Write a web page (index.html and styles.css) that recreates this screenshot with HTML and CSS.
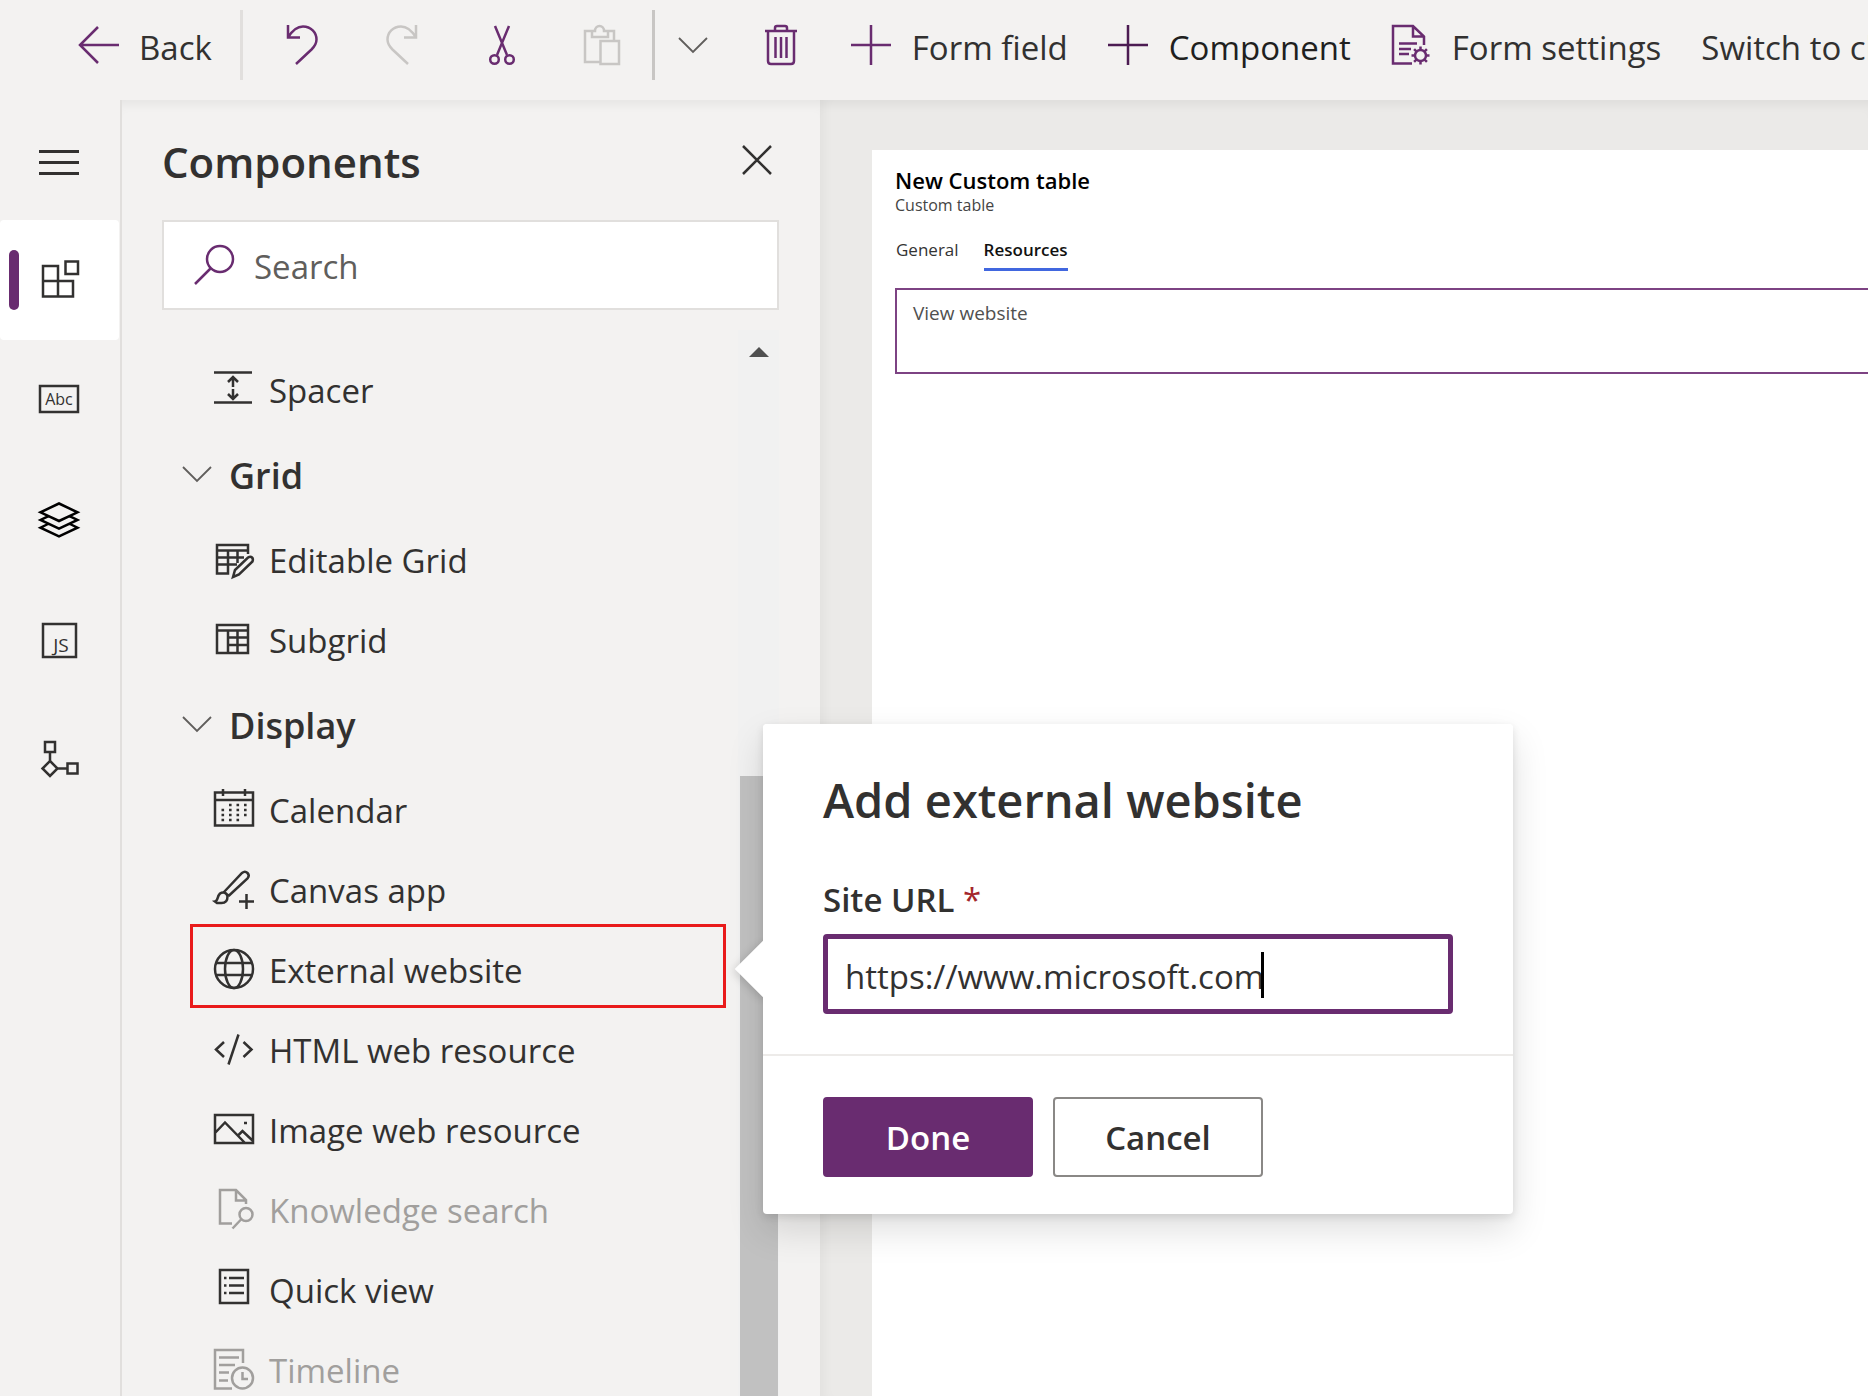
FILE: index.html
```html
<!DOCTYPE html>
<html lang="en">
<head>
<meta charset="utf-8">
<title>Form designer</title>
<link rel="stylesheet" href="styles.css">
</head>
<body>
<header class="bar">
  <button class="bar-item bar-back" type="button">
    <svg class="icon" viewBox="0 0 40 40"><path d="M40 20H1M19 2 1 20l18 18"/></svg><span>Back</span>
  </button>
  <span class="divider"></span>
  <button class="bar-icon" type="button" aria-label="Undo">
    <svg class="icon" viewBox="0 0 40 40"><path d="M6 0v12.500h12M6 12.500C10 6 15 1.500 21 1.500c8 0 13.500 6 13.500 13 0 5-3 8-5 10L14 39"/></svg>
  </button>
  <button class="bar-icon off" type="button" aria-label="Redo" disabled>
    <svg class="icon" viewBox="0 0 40 40"><path d="M34 0v12.500H22M34 12.500C30 6 25 1.500 19 1.500 11 1.500 5.500 7.500 5.500 14.500c0 5 3 8 5 10L26 39"/></svg>
  </button>
  <button class="bar-icon" type="button" aria-label="Cut">
    <svg class="icon" viewBox="0 0 40 40"><path d="M13 1l12 29M27 1 15 30"/><circle cx="12.500" cy="34.500" r="4.300"/><circle cx="27.500" cy="34.500" r="4.300"/></svg>
  </button>
  <button class="bar-icon off" type="button" aria-label="Paste" disabled>
    <svg class="icon" viewBox="0 0 40 40"><path d="M18 37H3V6h7M26 6h6v10M10 6h3c0-3 2-5 4.500-5S22 3 22 6h4v6H10zM18.500 16H37v23H18.500z"/></svg>
  </button>
  <span class="divider strong"></span>
  <button class="bar-icon narrow" type="button" aria-label="More paste options">
    <svg class="icon thin" viewBox="0 0 40 40"><path d="M6 13l14 14 14-14"/></svg>
  </button>
  <button class="bar-icon" type="button" aria-label="Delete">
    <svg class="icon" viewBox="0 0 40 40"><path d="M4 6h32M7 6v30q0 3 3 3h20q3 0 3-3V6M14 6V3q0-2 2-2h8q2 0 2 2v3M14.500 12v21M20 12v21M25.500 12v21"/></svg>
  </button>
  <button class="bar-item" type="button">
    <svg class="icon" viewBox="0 0 40 40"><path d="M20 0v40M0 20h40"/></svg><span>Form field</span>
  </button>
  <button class="bar-item hot" type="button">
    <svg class="icon" viewBox="0 0 40 40"><path d="M20 0v40M0 20h40"/></svg><span>Component</span>
  </button>
  <button class="bar-item" type="button">
    <svg class="icon" viewBox="0 0 40 40"><path d="M21 38.500H2V1h20l11 10.500V20M22 1v10.500h11M8 18.500h18M8 24h12M8 29h10"/><circle cx="29.500" cy="30.500" r="5.500"/><path d="M29.500 25v-3.500M29.500 36v3.500M24 30.500h-3.500M35 30.500h3.500M25.600 26.600l-2.500-2.500M33.400 34.400l2.500 2.500M33.400 26.600l2.500-2.500M25.600 34.400l-2.500 2.500"/></svg><span>Form settings</span>
  </button>
  <button class="bar-item" type="button"><span>Switch to classic</span></button>
</header>

<main class="work">
  <nav class="rail" aria-label="Designer panes">
    <button class="rail-item" type="button" aria-label="Menu">
      <svg class="icon heavy" viewBox="0 0 40 40"><path d="M0 11.500h40M0 22.500h40M0 33.500h40"/></svg>
    </button>
    <button class="rail-item active" type="button" aria-label="Components">
      <svg class="icon" viewBox="0 0 40 40"><path d="M19 21V6H4v30.500h30V21H4M19 21v15.500M26.500 1.500H39V14H26.500z"/></svg>
    </button>
    <button class="rail-item" type="button" aria-label="Table columns">
      <svg class="icon" viewBox="0 0 40 40"><path d="M1 6h38v26H1z"/><text class="glyph-abc" x="20" y="25" text-anchor="middle">Abc</text></svg>
    </button>
    <button class="rail-item black" type="button" aria-label="Tree view">
      <svg class="icon" viewBox="0 0 40 40"><path d="M20 3.500 38.500 12.300 20 21 1.500 12.300zM9 16.300 1.500 20 20 28.700 38.500 20 31 16.300M9 24 1.500 27.700 20 36.300l18.500-8.600L31 24"/></svg>
    </button>
    <button class="rail-item" type="button" aria-label="Form libraries">
      <svg class="icon" viewBox="0 0 40 40"><path d="M4 4h33v33H4z"/><text class="glyph-js" x="22" y="32" text-anchor="middle">JS</text></svg>
    </button>
    <button class="rail-item" type="button" aria-label="Business rules">
      <svg class="icon" viewBox="0 0 40 40"><path d="M6 2h10v10H6zM11 12v9M11 21l7.500 7.500L11 36l-7.500-7.500zM18.500 28.500H28M28.500 23.500h10v10h-10z"/></svg>
    </button>
  </nav>

  <section class="panel">
    <div class="panel-head">
      <h1>Components</h1>
      <button class="close" type="button" aria-label="Close">
        <svg class="icon" viewBox="0 0 40 40"><path d="M6 6l28 28M34 6 6 34"/></svg>
      </button>
    </div>
    <label class="search">
      <svg class="icon" viewBox="0 0 40 40"><circle cx="26" cy="14" r="13"/><path d="M17 23 1 39"/></svg>
      <input type="search" placeholder="Search" aria-label="Search components">
    </label>
    <div class="list-wrap">
      <div class="list">
        <button class="item" type="button"><svg class="icon" viewBox="0 0 40 40"><path d="M0 2.500h38M0 32.500h38M19 17V7M14 12l5-5 5 5M19 19v10M14 24l5 5 5-5"/></svg>Spacer</button>
        <h2 class="group"><svg class="chev" viewBox="0 0 30 30"><path d="M1 7l14 14L29 7"/></svg>Grid</h2>
        <button class="item" type="button"><svg class="icon" viewBox="0 0 40 40"><path d="M34 14V5H3v28.500h11V10.500M3 10.500h31M3 17.500h27M3 24.500h20M23.500 10.500V23"/><path d="M19 37l2-7L34 17.500q2.500-1.500 4 0t.5 4L25 34.500z"/></svg>Editable Grid</button>
        <button class="item" type="button"><svg class="icon" viewBox="0 0 40 40"><path d="M3 5h31v28H3zM3 10.500h31M14 10.500V33M23.500 10.500V33M14 17.500h20M14 25h20"/></svg>Subgrid</button>
        <h2 class="group"><svg class="chev" viewBox="0 0 30 30"><path d="M1 7l14 14L29 7"/></svg>Display</h2>
        <button class="item" type="button"><svg class="icon" viewBox="0 0 40 40"><path d="M1 2.500h38v33H1zM1 10h38M9 -1v7M31 -1v7"/><path class="dots" d="M15 15h18M7.500 20h26M7.500 25h26M7.500 30h18"/></svg>Calendar</button>
        <button class="item" type="button"><svg class="icon" viewBox="0 0 40 40"><path d="M10 22 28 3q3-2.500 5.500 0t0 5.500L14.500 26M1 31.500c3-.5 2-5 5-8 3-2 7-1 7.500 3 0 5-3 6.500-6 6.500H3zM10 22l5 4M32.500 24v15M25 31.500h15"/></svg>Canvas app</button>
        <button class="item marked" type="button"><svg class="icon" viewBox="0 0 40 40"><circle cx="20" cy="19" r="19"/><ellipse cx="20" cy="19" rx="9" ry="19"/><path d="M2 13h36M2 25h36"/></svg>External website</button>
        <button class="item" type="button"><svg class="icon" viewBox="0 0 40 40"><path d="M10 12 2 19.500 10 27M29.500 12l8 7.500-8 7.500M24.500 4.500l-10 30"/></svg>HTML web resource</button>
        <button class="item" type="button"><svg class="icon" viewBox="0 0 40 40"><path d="M1 5h38v28H1zM1 23l10-10.500L31 33M24 25.500l4.500-4.500L39 31M30 13h3"/></svg>Image web resource</button>
        <button class="item" type="button" disabled><svg class="icon" viewBox="0 0 40 40"><path d="M18 33.500H6V0h16l10 10v4M22 0v10.500h10"/><circle cx="32" cy="24.500" r="6.500"/><path d="M27.500 29 18.500 38.500"/></svg>Knowledge search</button>
        <button class="item" type="button"><svg class="icon" viewBox="0 0 40 40"><path d="M6 0h28v33H6zM10 8h2.500M15 8h15M10 15.500h2.500M15 15.500h15M10 23h2.500M15 23h15"/></svg>Quick view</button>
        <button class="item" type="button" disabled><svg class="icon" viewBox="0 0 40 40"><path d="M18 38.500H1V0h28v13M5 7.500h20M5 15h16M5 22.500h10M5 30.500h9"/><circle cx="28.500" cy="28" r="10.500"/><path d="M28.500 22v7H34"/></svg>Timeline</button>
      </div>
      <div class="scroll" aria-hidden="true">
        <svg class="scroll-up" viewBox="0 0 20 10"><path d="M10 0 20 10H0z"/></svg>
        <div class="thumb"></div>
      </div>
    </div>
  </section>

  <section class="canvas">
    <div class="form">
      <h2 class="form-title">New Custom table</h2>
      <p class="form-sub">Custom table</p>
      <div class="tabs" role="tablist">
        <button class="tab" type="button" role="tab">General</button>
        <button class="tab selected" type="button" role="tab" aria-selected="true">Resources</button>
      </div>
      <div class="section">View website</div>
    </div>
  </section>

  <form class="callout" role="dialog" aria-labelledby="callout-title">
    <div class="callout-body">
      <h2 id="callout-title">Add external website</h2>
      <label for="site-url">Site URL <span class="req">*</span></label>
      <div class="field">
        <input id="site-url" type="text" value="https://www.microsoft.com">
        <span class="caret"></span>
      </div>
    </div>
    <div class="callout-foot">
      <button class="btn primary" type="button">Done</button>
      <button class="btn" type="button">Cancel</button>
    </div>
  </form>
</main>
</body>
</html>
```
FILE: styles.css
```css
* { box-sizing: border-box; }

:root {
  --brand: #692c70;
  --ink: #323130;
  --paper: #f3f2f1;
  --line: #e1dfdd;
  --muted: #a19f9d;
}

body {
  margin: 0;
  height: 100vh;
  display: flex;
  flex-direction: column;
  overflow: hidden;
  background: var(--paper);
  color: var(--ink);
  font-family: "Open Sans", "Noto Sans", sans-serif;
  font-size: 33px;
}

h1, h2, p { margin: 0; font-weight: 600; }

button, input { font: inherit; color: inherit; }

button {
  border: 0;
  padding: 0;
  background: none;
  white-space: nowrap;
}

.icon {
  flex: none;
  width: 40px;
  height: 40px;
  overflow: visible;
  fill: none;
  stroke: currentColor;
  stroke-width: 2.5;
}

.icon.thin { stroke-width: 1.8; color: #605e5c; }
.icon.heavy { stroke-width: 3; }

/* command bar */
.bar {
  flex: none;
  display: flex;
  align-items: center;
  height: 100px;
  padding-bottom: 10px;
  overflow: hidden;
}

.bar-item {
  flex: none;
  display: flex;
  align-items: center;
  gap: 21px;
  padding: 0 20px;
}

.bar-item .icon, .bar-icon { color: var(--brand); }
.bar-item span { padding-top: 4px; }
.bar-back { gap: 20px; padding: 0 28px 0 79px; }

.bar-icon {
  flex: none;
  display: flex;
  justify-content: center;
  width: 100px;
}

.bar-icon.off { color: #c8c6c4; }
.bar-icon.narrow { width: 76px; }
.hot { color: #201f1e; }
.hot .icon { color: #4b1b52; }

.divider {
  flex: none;
  width: 3px;
  height: 70px;
  margin-right: 9px;
  background: var(--line);
}

.divider.strong { margin-right: 0; background: #c8c6c4; }

/* work area */
.work {
  position: relative;
  flex: 1;
  min-height: 0;
  display: flex;
}

.rail {
  flex: none;
  width: 122px;
  border-right: 2px solid var(--line);
}

.rail-item {
  position: relative;
  display: flex;
  align-items: center;
  width: 119px;
  height: 120px;
  padding-left: 39px;
}

.rail-item.active { background: #fff; border-radius: 4px; }
.rail-item.black { color: #000; }

.rail-item.active::before {
  content: "";
  position: absolute;
  left: 9px;
  width: 10px;
  height: 60px;
  border-radius: 5px;
  background: var(--brand);
}

.glyph-abc, .glyph-js { fill: currentColor; stroke: none; font-size: 16px; font-weight: 500; }
.glyph-js { font-size: 19px; }

/* components panel */
.panel {
  flex: none;
  width: 698px;
  display: flex;
  flex-direction: column;
  padding: 0 41px 0 40px;
  box-shadow: inset 0 12px 12px -8px rgba(0, 0, 0, .06);
}

.panel-head {
  flex: none;
  display: flex;
  align-items: center;
  justify-content: space-between;
  height: 120px;
}

.panel-head h1 { font-size: 42px; padding-top: 2px; }
.close { display: flex; margin-right: 2px; }

.search {
  flex: none;
  display: flex;
  align-items: center;
  gap: 20px;
  height: 90px;
  padding: 0 30px;
  border: 2px solid var(--line);
  background: #fff;
}

.search .icon { color: var(--brand); }

.search input {
  flex: 1;
  min-width: 0;
  border: 0;
  padding: 2px 0 0;
  outline: 0;
  background: none;
}

.search input::placeholder { color: #605e5c; opacity: 1; }

.list-wrap {
  flex: 1;
  min-height: 0;
  display: flex;
  margin-top: 20px;
  overflow: hidden;
}

.list { flex: 1; padding-top: 20px; }

.item {
  position: relative;
  display: flex;
  align-items: center;
  gap: 15px;
  width: 100%;
  height: 80px;
  padding-left: 52px;
}

.item:disabled { color: var(--muted); }

/* the row that the callout belongs to */
.item.marked::after {
  content: "";
  position: absolute;
  inset: -6px 12px 2px 28px;
  border: 3px solid #e91b1b;
}

.dots { stroke-width: 2.6; stroke-dasharray: 2.6 4.9; }

.group {
  display: flex;
  align-items: center;
  gap: 17px;
  height: 90px;
  padding-left: 20px;
  font-size: 36px;
}

.chev {
  width: 30px;
  height: 30px;
  fill: none;
  stroke: #605e5c;
  stroke-width: 1.8;
}

.scroll {
  flex: none;
  display: flex;
  flex-direction: column;
  align-items: center;
  width: 41px;
  padding-top: 17px;
  background: #f1f1f1;
}

.scroll-up { flex: none; width: 20px; height: 10px; fill: #505050; }
.thumb { flex: 1; width: 38px; margin-top: 419px; background: #c1c1c1; }

/* form canvas */
.canvas {
  flex: 1;
  min-width: 0;
  display: flex;
  padding: 50px 0 0 52px;
  background: #ebeae8;
  box-shadow: inset 0 12px 12px -8px rgba(0, 0, 0, .06), inset 12px 0 12px -8px rgba(0, 0, 0, .04);
}

.form {
  flex: 1;
  min-width: 0;
  padding: 15px 0 0 23px;
  background: #fff;
}

.form-title { color: #000; font-size: 22px; line-height: 30px; }
.form-sub { color: #444; font-size: 16px; line-height: 20px; font-weight: 500; }

.tabs { display: flex; gap: 25px; margin-top: 25px; padding-left: 1px; }

.tab {
  height: 31px;
  padding-bottom: 8px;
  border-bottom: 3px solid transparent;
  color: #333;
  font-size: 17px;
  line-height: 20px;
}

.tab.selected { border-color: #4167df; color: #111; font-weight: 600; }

.section {
  height: 86px;
  margin-top: 17px;
  padding: 10px 16px;
  border: 2px solid #7d4383;
  border-right: 0;
  color: #505050;
  font-size: 19px;
  line-height: 26px;
}

/* callout */
.callout {
  position: absolute;
  left: 763px;
  top: 624px;
  width: 750px;
  border-radius: 4px;
  background: #fff;
  box-shadow: 0 16px 36px rgba(0, 0, 0, .13), 0 3px 9px rgba(0, 0, 0, .11);
}

.callout::before {
  content: "";
  position: absolute;
  left: -20px;
  top: 225px;
  width: 40px;
  height: 40px;
  background: #fff;
  box-shadow: 0 3px 9px rgba(0, 0, 0, .15);
  transform: rotate(45deg);
}

.callout-body {
  position: relative;
  padding: 40px 60px;
  border-radius: 4px;
  background: #fff;
}

.callout-body h2 { font-size: 47px; line-height: 72px; }

.callout-body label {
  display: block;
  margin-top: 40px;
  font-weight: 600;
  line-height: 48px;
}

.req { color: #a4262c; font-weight: 400; }

.field { position: relative; margin-top: 10px; }

.field input {
  display: block;
  width: 100%;
  height: 80px;
  padding: 4px 17px 0;
  border: 5px solid var(--brand);
  border-radius: 4px;
  outline: 0;
  background: #fff;
}

.caret {
  position: absolute;
  left: 438px;
  top: 18px;
  width: 3px;
  height: 46px;
  background: #000;
}

.callout-foot {
  display: flex;
  gap: 20px;
  padding: 41px 60px 37px;
  border-top: 2px solid #edebe9;
}

.btn {
  width: 210px;
  height: 80px;
  border: 2px solid #8a8886;
  border-radius: 4px;
  background: #fff;
  font-weight: 600;
}

.btn.primary { border-color: var(--brand); background: var(--brand); color: #fff; }
```
